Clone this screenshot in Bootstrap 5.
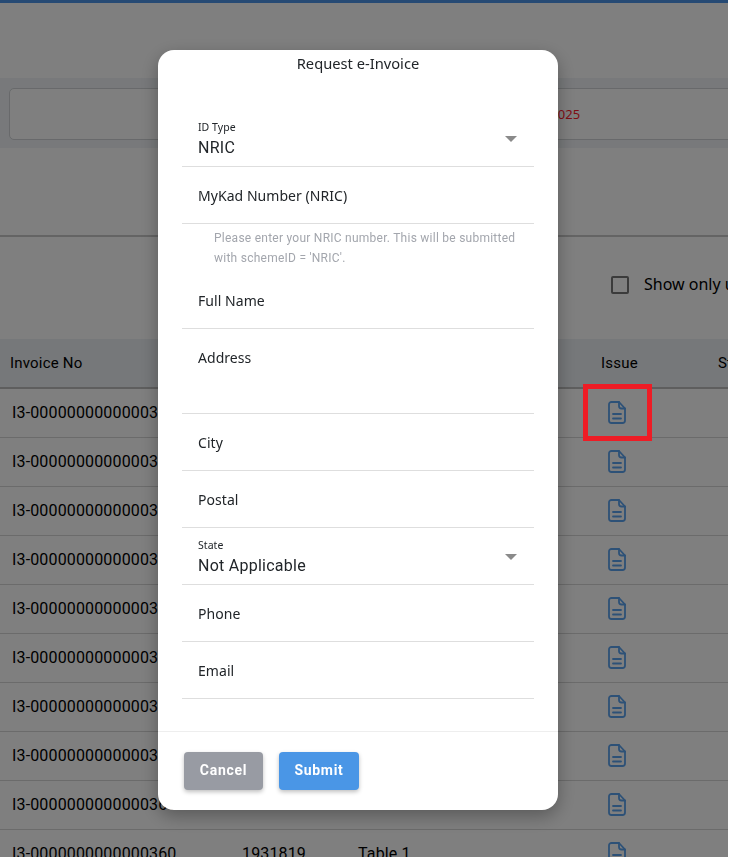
<!DOCTYPE html>
<html lang="en">
<head>
<meta charset="utf-8">
<title>Request e-Invoice</title>
<link href="https://cdn.jsdelivr.net/npm/bootstrap@5.3.0/dist/css/bootstrap.min.css" rel="stylesheet">
<style>
html,body{height:857px;overflow:hidden;background:#fff;font-family:Roboto,sans-serif;color:#212529}
.shell{width:728px;height:857px;overflow:hidden;position:relative;background:#fff}
.topline{height:3px;background:#4c95e8}
.filter-band{margin-top:75px;height:70px;background:#f0f3f6;padding:10px 0 9px 9px}
.filter-box{width:760px;height:52px;background:#fff;border:1px solid #d0d3d6;border-radius:5px;padding-left:501px;font-family:"Noto Sans",sans-serif;font-size:13px;color:#ff1a2b;line-height:50px}
.rule{margin-top:87px;height:2px;background:#c9c9c9}
.only-row{height:102px;padding:39px 0 0 611px;font-family:"Noto Sans",sans-serif;font-size:16px;line-height:16px;white-space:nowrap;gap:15px;color:#000}
.tick{width:18px;height:18px;border:2px solid #777;border-radius:2px;flex:none}
.invoice-table{table-layout:fixed;width:820px;margin:0;font-size:16px;--bs-table-bg:transparent;--bs-table-color:#000}
.invoice-table th{height:49px;background:#ecf0f4;font-weight:400;font-size:15px;letter-spacing:.2px;padding:0 0 0 10px;vertical-align:middle;border-bottom:2px solid #bdbdbd;color:#000}
.invoice-table td{height:49px;padding:0 0 0 12px;vertical-align:middle;border-bottom:1px solid #d6d6d6;white-space:nowrap;overflow:visible;letter-spacing:.15px;color:#000}
.invoice-table td.ic{padding-left:17px}
.doc{display:block;width:18px;height:23px;fill:none;stroke:#5aa2ee;stroke-width:1.8;stroke-linecap:round;stroke-linejoin:round}
.marker{position:absolute;left:583px;top:384px;width:69px;height:57px;border:5px solid #ee1c25;z-index:1060}
.modal-backdrop{width:728px;height:857px}
.modal{width:733px;height:857px;overflow:hidden}
.modal-dialog.req{width:400px;max-width:400px;margin:50px 0 0 158px}
.req .modal-content{height:760px;border:0;border-radius:16px;box-shadow:0 6px 18px rgba(0,0,0,.3)}
.req-title{font-family:"Noto Sans",sans-serif;font-size:14.7px;text-align:center;line-height:20px;padding-top:3px;height:60px;color:#212529}
.req-form{padding:0 24px;height:621px}
.fld{height:57px;border-bottom:1px solid #dedede;padding:0 16px;display:flex;align-items:center;font-family:"Noto Sans",sans-serif;font-size:14px;letter-spacing:.05px;color:#212529}
.fld.tall{height:85px;align-items:flex-start;padding-top:18px}
.fld.sel{justify-content:space-between;padding:3px 17px 0 16px;height:57px}
.sel-label{font-family:"Noto Sans",sans-serif;font-size:10.5px;line-height:14px;margin-bottom:3px}
.sel-value{font-family:Roboto,sans-serif;font-size:16px;line-height:22px;letter-spacing:.25px}
.caret-down{width:0;height:0;border-left:6px solid transparent;border-right:6px solid transparent;border-top:6px solid #8a8a8a;margin-top:-1px}
.hint{font-size:12px;line-height:20px;letter-spacing:.25px;color:#a3a6ad;padding:4px 0 4px 32px;height:48px;white-space:nowrap}
.req-foot{border-top:1px solid #eee;padding:20px 26px;gap:16px;height:79px}
.act{height:38px;border:0;border-radius:4px;font-size:14px;font-weight:700;letter-spacing:.7px;color:#fff;padding:0 0 2px;box-shadow:0 2px 4px rgba(0,0,0,.25)}
.act-cancel{width:79px;background:#989ba3}
.act-submit{width:80px;background:#4a96e6}
.act:hover{color:#fff}
</style>
</head>
<body>
<div class="shell">
  <div class="topline"></div>
  <div class="filter-band"><div class="filter-box">01/01/2025</div></div>
  <div class="rule"></div>
  <div class="only-row d-flex align-items-start"><span class="tick"></span><span>Show only unissued</span></div>
  <table class="table invoice-table">
    <colgroup><col style="width:230px"><col style="width:116px"><col style="width:245px"><col style="width:117px"><col></colgroup>
    <thead><tr><th>Invoice No</th><th>Receipt No</th><th>Table</th><th>Issue</th><th>Status</th></tr></thead>
    <tbody id="rows"></tbody>
  </table>
</div>
<div class="marker"></div>
<div class="modal-backdrop fade show"></div>
<div class="modal d-block" tabindex="-1">
  <div class="modal-dialog req">
    <div class="modal-content">
      <div class="req-title">Request e-Invoice</div>
      <form class="req-form">
        <div class="fld sel"><div><div class="sel-label">ID Type</div><div class="sel-value">NRIC</div></div><span class="caret-down"></span></div>
        <div class="fld">MyKad Number (NRIC)</div>
        <div class="hint">Please enter your NRIC number. This will be submitted<br>with schemeID = 'NRIC'.</div>
        <div class="fld">Full Name</div>
        <div class="fld tall">Address</div>
        <div class="fld">City</div>
        <div class="fld">Postal</div>
        <div class="fld sel"><div><div class="sel-label">State</div><div class="sel-value">Not Applicable</div></div><span class="caret-down"></span></div>
        <div class="fld">Phone</div>
        <div class="fld">Email</div>
      </form>
      <div class="req-foot d-flex align-items-start">
        <button type="button" class="btn act act-cancel">Cancel</button>
        <button type="button" class="btn act act-submit">Submit</button>
      </div>
    </div>
  </div>
</div>
<script>
var html='';
for(var i=369;i>=360;i--){
  html+='<tr><td>I3-0000000000000'+i+'</td><td>19318'+(i-341)+'</td><td>Table 1</td><td class="ic"><svg class="doc" viewBox="0 0 18 23"><path d="M3.5 1h7.5l6 6.5V19.500a2.500 2.500 0 0 1-2.500 2.500h-11A2.500 2.500 0 0 1 1 19.500V3.500A2.500 2.500 0 0 1 3.500 1z"/><path d="M11 1v4a2.500 2.500 0 0 0 2.500 2.500H17"/><path d="M5 13h8M5 17.500h8"/></svg></td><td></td></tr>';
}
document.getElementById('rows').innerHTML=html;
</script>
<script src="https://cdn.jsdelivr.net/npm/bootstrap@5.3.0/dist/js/bootstrap.bundle.min.js"></script>
</body>
</html>
